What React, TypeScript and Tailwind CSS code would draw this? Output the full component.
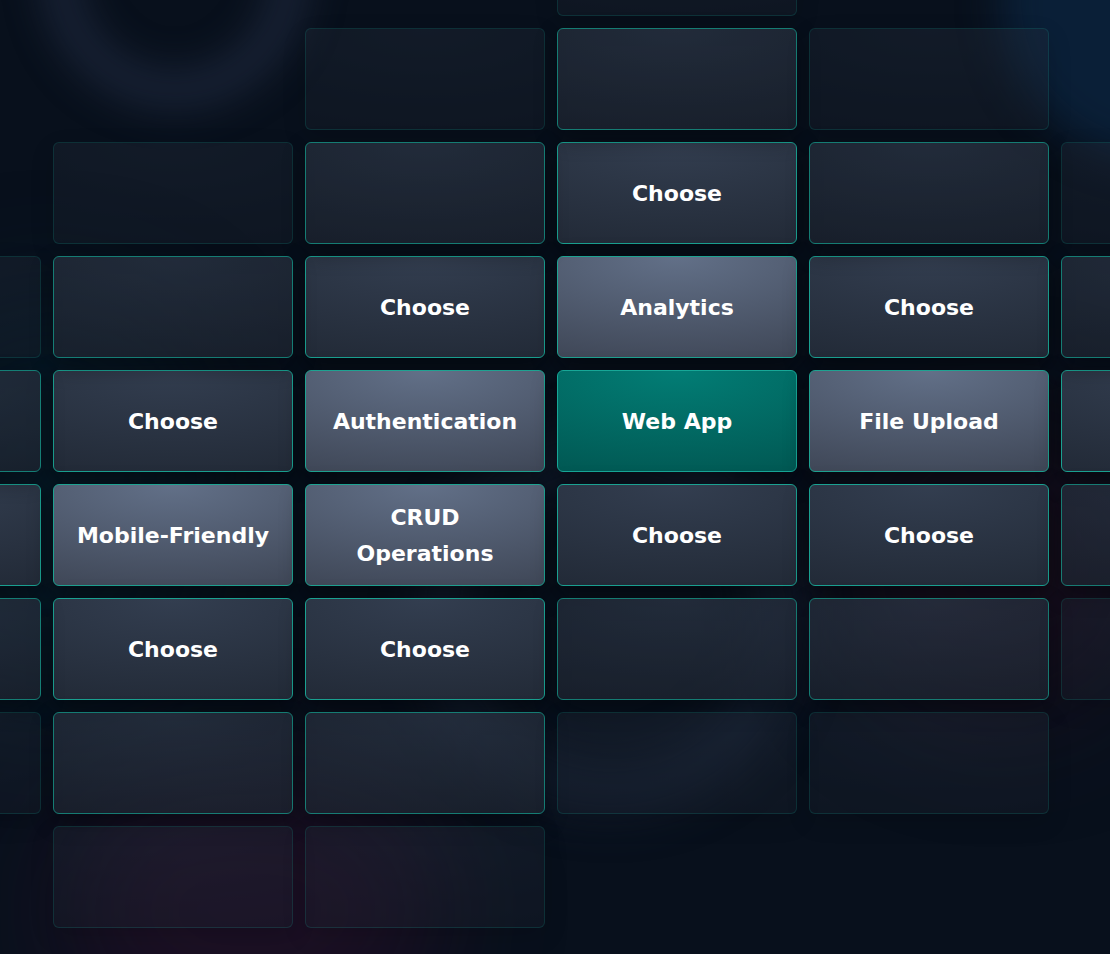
import React from 'react';

type Cell =
  | { kind: 'none' }
  | { kind: 'faint' }
  | { kind: 'near' }
  | { kind: 'choose' }
  | { kind: 'picked'; label: string[] }
  | { kind: 'center'; label: string };

const n: Cell = { kind: 'none' };
const f: Cell = { kind: 'faint' };
const m: Cell = { kind: 'near' };
const C: Cell = { kind: 'choose' };
const P = (...label: string[]): Cell => ({ kind: 'picked', label });

// rows -4..4, columns -3..2 around the "Web App" tile
const board: Cell[][] = [
  [n, n, n, f, n, n],
  [n, n, f, m, f, n],
  [n, f, m, C, m, f],
  [f, m, C, P('Analytics'), C, m],
  [m, C, P('Authentication'), { kind: 'center', label: 'Web App' }, P('File Upload'), C],
  [C, P('Mobile-Friendly'), P('CRUD', 'Operations'), C, C, m],
  [m, C, C, m, m, f],
  [f, m, m, f, f, n],
  [n, f, f, n, n, n],
];

const base =
  'flex flex-col items-center justify-center rounded-md border pt-0.5 text-center text-white font-bold text-[22px] leading-[36px] shadow-[0_8px_24px_rgba(0,0,0,0.45)]';

function Tile({ cell }: { cell: Cell }) {
  switch (cell.kind) {
    case 'none':
      return <div />;
    case 'faint':
      return (
        <div className={`${base} opacity-30 border-[#1aa191]/70 bg-[radial-gradient(120%_110%_at_50%_0%,#2b3545_0%,#1d2430_100%)]`} />
      );
    case 'near':
      return (
        <div className={`${base} opacity-75 border-[#1aa191] bg-[radial-gradient(120%_110%_at_50%_0%,#2b3545_0%,#1d2430_100%)]`} />
      );
    case 'choose':
      return (
        <div className={`${base} border-[#1aa191] bg-[radial-gradient(120%_110%_at_50%_0%,#333e50_0%,#222a37_100%)]`}>
          Choose
        </div>
      );
    case 'picked':
      return (
        <div className={`${base} border-[#1ea291] bg-[radial-gradient(120%_110%_at_50%_0%,#627088_0%,#3f4757_100%)]`}>
          {cell.label.map((l) => (
            <span key={l}>{l}</span>
          ))}
        </div>
      );
    case 'center':
      return (
        <div className={`${base} border-[#17a797] bg-[radial-gradient(120%_110%_at_50%_0%,#027d75_0%,#015853_100%)]`}>
          {cell.label}
        </div>
      );
  }
}

export default function App() {
  return (
    <div className="relative h-[954px] w-full overflow-hidden bg-[#08101c] font-['DejaVu_Sans',sans-serif]">
      {/* soft background glows */}
      <div className="pointer-events-none absolute left-[40px] top-[-160px] h-[270px] w-[270px] rounded-full border-[40px] border-[#2a3550]/45 blur-[18px]" />
      <div className="pointer-events-none absolute left-[1000px] top-[-160px] h-[320px] w-[320px] rounded-full bg-[#0c2a4a]/60 blur-[20px]" />
      <div className="pointer-events-none absolute left-[420px] top-[430px] h-[380px] w-[380px] rounded-full border-[40px] border-[#1f2c44]/50 blur-[24px]" />
      <div className="pointer-events-none absolute left-[60px] top-[780px] h-[260px] w-[380px] rounded-full bg-[#3a1030]/40 blur-[60px]" />
      <div className="pointer-events-none absolute left-[850px] top-[420px] h-[300px] w-[300px] rounded-full bg-[#2a0a1e]/40 blur-[60px]" />
      <div className="pointer-events-none absolute left-[-100px] top-[300px] h-[400px] w-[300px] rounded-full bg-[#06202e]/50 blur-[60px]" />

      <div className="relative -ml-[199px] -mt-[86px] grid w-max grid-cols-[repeat(6,240px)] auto-rows-[102px] gap-3">
        {board.flatMap((row, r) =>
          row.map((cell, c) => <Tile key={`${r}-${c}`} cell={cell} />)
        )}
      </div>
    </div>
  );
}
